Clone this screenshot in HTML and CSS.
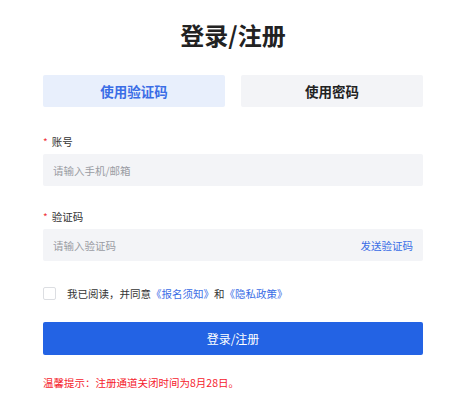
FILE: index.html
```html
<!DOCTYPE html>
<html lang="zh-CN">
<head>
    <meta charset="UTF-8">
    <meta name="viewport" content="width=device-width, initial-scale=1.0">
    <title>登录/注册</title>
    <link rel="stylesheet" href="styles.css">
</head>
<body>
    <div class="login-box">
        <h1>登录/注册</h1>

        <!-- Tabs -->
        <div class="tabs">
            <div class="tab active">使用验证码</div>
            <div class="tab">使用密码</div>
        </div>

        <!-- Account -->
        <div class="field">
            <label class="field-label"><span class="star">*</span>账号</label>
            <div class="input-box">
                <input type="text" placeholder="请输入手机/邮箱">
            </div>
        </div>

        <!-- Code -->
        <div class="field">
            <label class="field-label"><span class="star">*</span>验证码</label>
            <div class="input-box">
                <input type="text" placeholder="请输入验证码">
                <a href="#" class="send-code">发送验证码</a>
            </div>
        </div>

        <div class="agree">
            <span class="checkbox"></span>
            <span>我已阅读，并同意<a href="#">《报名须知》</a>和<a href="#">《隐私政策》</a></span>
        </div>

        <button class="submit">登录/注册</button>

        <p class="tip">温馨提示：注册通道关闭时间为8月28日。</p>
    </div>
</body>
</html>
```

FILE: styles.css
```css
body {
    margin: 0;
    padding: 0;
    background: #fff;
    font-family: "Noto Sans CJK SC", "Noto Sans", sans-serif;
    color: #333;
}
.login-box {
    width: 380px;
    margin: 0 auto;
}
.login-box h1 {
    margin: 18px 0 0;
    font-size: 24px;
    line-height: 34px;
    font-weight: bold;
    text-align: center;
    color: #222;
}
.tabs {
    display: flex;
    gap: 16px;
    margin-top: 23px;
}
.tab {
    flex: 1;
    height: 32px;
    line-height: 32px;
    text-align: center;
    font-size: 13.5px;
    font-weight: bold;
    background: #f3f4f7;
    color: #222;
    border-radius: 2px;
}
.tab.active {
    background: #e8effc;
    color: #3a6de6;
}
.field {
    margin-top: 27px;
}
.field + .field {
    margin-top: 23px;
}
.field-label {
    display: block;
    font-size: 10.5px;
    line-height: 16px;
    color: #333;
}
.star {
    color: #f0353c;
    margin-right: 4px;
    font-size: 10px;
}
.input-box {
    display: flex;
    align-items: center;
    height: 32px;
    margin-top: 4px;
    padding: 0 10px;
    background: #f3f4f7;
    border-radius: 2px;
}
.input-box input {
    flex: 1;
    border: none;
    outline: none;
    background: transparent;
    padding: 0;
    font-family: inherit;
    font-size: 10.5px;
}
.input-box input::placeholder {
    color: #9a9ca3;
}
.send-code {
    color: #3a6de6;
    font-size: 10.5px;
    text-decoration: none;
}
.agree {
    display: flex;
    align-items: center;
    margin-top: 24px;
    height: 16px;
    font-size: 10.5px;
    color: #333;
}
.checkbox {
    width: 11px;
    height: 11px;
    border: 1px solid #dcdee2;
    border-radius: 2px;
    margin-right: 11px;
}
.agree a {
    color: #3a6de6;
    text-decoration: none;
}
.submit {
    display: block;
    width: 100%;
    height: 33px;
    margin-top: 21px;
    border: none;
    border-radius: 2px;
    background: #2363e4;
    color: #fff;
    font-family: inherit;
    font-size: 12px;
    cursor: pointer;
}
.tip {
    margin: 20px 0 0;
    font-size: 10.5px;
    line-height: 16px;
    color: #f5222d;
}
```
